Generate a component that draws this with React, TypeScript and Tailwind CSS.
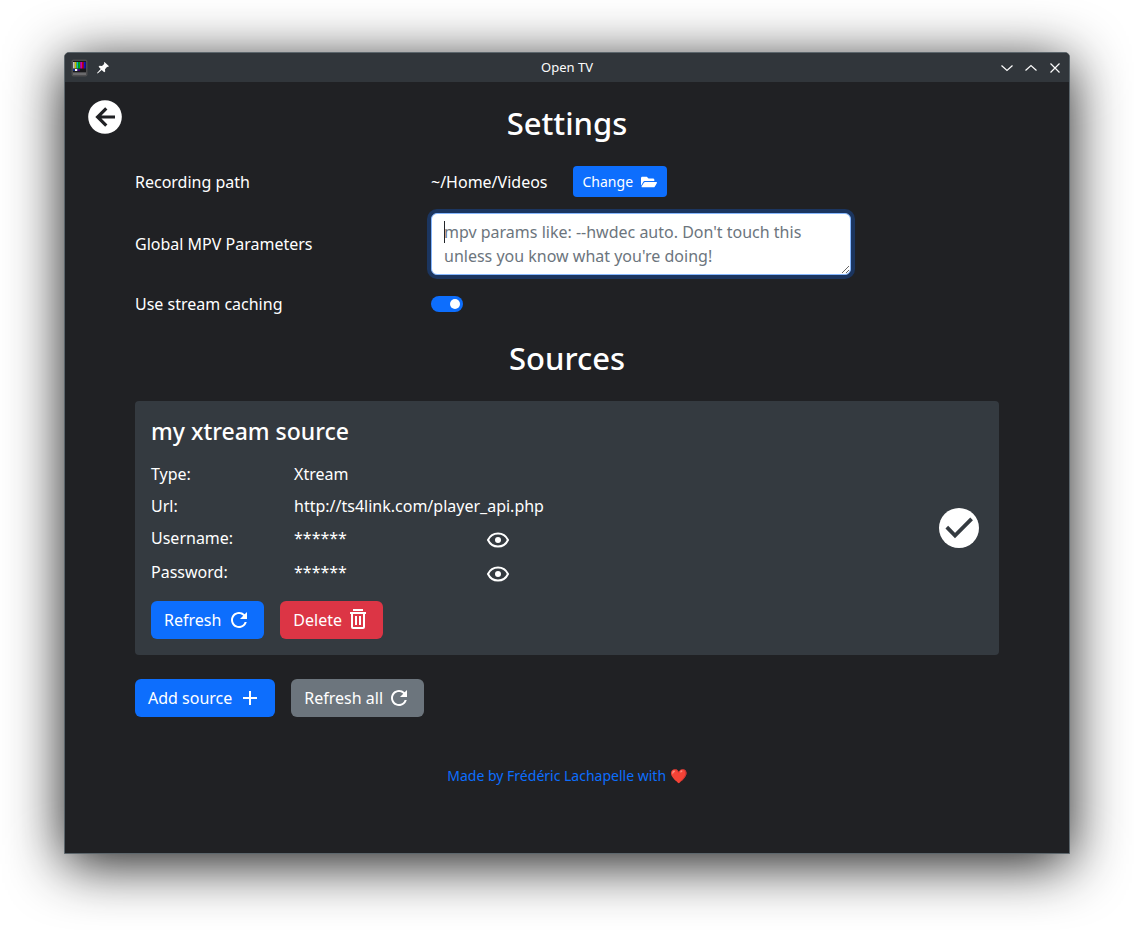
import React, { useState } from "react";
import { MdRefresh, MdAdd } from "react-icons/md";
import { FaFolderOpen } from "react-icons/fa";

const solid = "inline-flex h-[38px] items-center rounded-md px-[13px] text-base text-white";

function TvIcon() {
  return (
    <svg width="18" height="18" viewBox="0 0 18 18" aria-hidden="true">
      <rect x=".5" y=".5" width="16" height="17" rx="2" fill="#4c4c4e" />
      <rect x="2" y="2" width="13" height="11" fill="#19191b" />
      <rect x="2" y="3" width="1.8" height="6.5" fill="#c0c0c0" />
      <rect x="3.8" y="3" width="1.8" height="6.5" fill="#c9c400" />
      <rect x="5.6" y="3" width="1.8" height="6.5" fill="#00bdbd" />
      <rect x="7.4" y="3" width="1.8" height="6.5" fill="#00b800" />
      <rect x="9.2" y="3" width="1.8" height="6.5" fill="#c000b8" />
      <rect x="11" y="3" width="1.8" height="6.5" fill="#c40010" />
      <rect x="12.8" y="3" width="1.8" height="6.5" fill="#1010c8" />
      <rect x="2" y="10" width="2" height="2" fill="#14307c" />
      <rect x="4" y="10" width="2.5" height="2" fill="#fff" />
      <rect x="6.5" y="10" width="2.5" height="2" fill="#3c0878" />
      <rect x="2" y="14" width="13" height="2" fill="#6a6a6c" />
    </svg>
  );
}

function PinIcon() {
  return (
    <svg width="12" height="12" viewBox="0 0 12 12" fill="#fcfcfc" aria-hidden="true">
      <path d="M7.5 0 12 4.2 10.8 5.1 10.2 4.8 8 7.2 8.2 9.4 7.2 10.2 4.7 8 .7 11.6 0 11 3.7 7.1 1.6 4.7 2.5 3.8 5 4 7.4 1.8 6.8 1z" />
    </svg>
  );
}

function BackIcon() {
  return (
    <svg width="34" height="34" viewBox="0 0 34 34" aria-hidden="true">
      <circle cx="17" cy="17" r="16.8" fill="#fff" />
      <path d="M27 17H10M18.3 8.3 9.6 17l8.7 8.7" fill="none" stroke="#202124" strokeWidth="3.2" />
    </svg>
  );
}

function CheckIcon() {
  return (
    <svg width="40" height="40" viewBox="0 0 40 40" role="img" aria-label="Enabled">
      <circle cx="20" cy="20" r="20" fill="#fff" />
      <path d="m7.8 19.2 8.2 8.3 16.6-16.6" fill="none" stroke="#343a40" strokeWidth="3.8" />
    </svg>
  );
}

function TrashIcon() {
  return (
    <svg width="24" height="24" viewBox="0 0 24 24" fill="none" stroke="#fff" strokeWidth="2" aria-hidden="true">
      <path d="M7 2h10M4 5h16M6 5v14q0 1 1 1h10q1 0 1-1V5M10 8v9M14 8v9" />
    </svg>
  );
}

function EyeIcon() {
  return (
    <svg width="24" height="24" viewBox="0 0 24 24" aria-hidden="true">
      <path d="M2 12c2-4.2 5.8-6.5 10-6.5s8 2.3 10 6.5c-2 4.2-5.8 6.5-10 6.5S4 16.2 2 12z" fill="none" stroke="#fff" strokeWidth="2" />
      <circle cx="12" cy="12" r="3" fill="#fff" />
    </svg>
  );
}

function WindowButton({ label, d }: { label: string; d: string }) {
  return (
    <button aria-label={label} className="flex size-4 items-center justify-center">
      <svg width="12" height="12" viewBox="0 0 12 12" fill="none" stroke="#fcfcfc" strokeWidth="1.2">
        <path d={d} />
      </svg>
    </button>
  );
}

function Secret({ label, value }: { label: string; value: string }) {
  const [shown, setShown] = useState(false);
  return (
    <>
      <dt>{label}:</dt>
      <dd className="flex h-[26px] items-start">
        <span className="w-48">{shown ? value : "******"}</span>
        <button aria-label={`Show ${label.toLowerCase()}`} className="mt-0.5" onClick={() => setShown(!shown)}>
          <EyeIcon />
        </button>
      </dd>
    </>
  );
}

export default function App() {
  const [caching, setCaching] = useState(true);
  const [params, setParams] = useState("");
  return (
    <div className="min-h-screen bg-white px-16 pt-[52px] pb-[76px] font-['Noto_Sans',sans-serif] text-base text-white">
      <div className="overflow-hidden rounded-t-[5px] border border-[#5c666c] bg-[#202124] shadow-[0_10px_56px_rgba(0,0,0,0.9)]">
        <header className="grid h-[29px] grid-cols-[1fr_auto_1fr] items-center bg-[#31363b] px-1.5 text-[13px] text-[#fcfcfc]">
          <div className="flex items-center gap-2">
            <TvIcon />
            <PinIcon />
          </div>
          <span>Open TV</span>
          <div className="flex justify-end gap-2">
            <WindowButton label="Minimize" d="m.5 3.5 5.5 5 5.5-5" />
            <WindowButton label="Maximize" d="m.5 8.5 5.5-5 5.5 5" />
            <WindowButton label="Close" d="m1.5 1.5 9 9m0-9-9 9" />
          </div>
        </header>
        <main className="relative px-[70px] pt-[21px] pb-[66px]">
          <button aria-label="Back" className="absolute top-[18px] left-[23px]">
            <BackIcon />
          </button>
          <h2 className="text-center text-[31px] leading-10 font-medium">Settings</h2>
          <div className="mt-[23px] grid grid-cols-[1fr_2fr] items-center gap-x-3 gap-y-4">
            <span>Recording path</span>
            <div className="flex items-center gap-[25px]">
              <span>~/Home/Videos</span>
              <button className="flex h-[31px] items-center gap-2 rounded-[4px] bg-[#0d6efd] px-2.5 text-sm">
                Change
                <FaFolderOpen size={16} />
              </button>
            </div>
            <label htmlFor="mpv">Global MPV Parameters</label>
            <div className="relative">
              <textarea
                id="mpv"
                autoFocus
                rows={2}
                value={params}
                onChange={(e) => setParams(e.target.value)}
                placeholder="mpv params like: --hwdec auto. Don't touch this unless you know what you're doing!"
                className="peer block h-[62px] w-full max-w-[420px] rounded-md border border-[#86b7fe] bg-white px-3 py-1.5 leading-6 text-[#212529] shadow-[0_0_0_4px_#1b355f] outline-none placeholder:text-[#6c757d]"
              />
              <span className="pointer-events-none absolute top-2 left-[13px] hidden h-[22px] w-px bg-[#212529] peer-placeholder-shown:block" />
            </div>
            <label htmlFor="caching" className="leading-[26px]">Use stream caching</label>
            <input
              id="caching"
              type="checkbox"
              role="switch"
              checked={caching}
              onChange={(e) => setCaching(e.target.checked)}
              className="flex h-4 w-8 appearance-none items-center rounded-full bg-[#6c757d] px-[3px] before:size-2.5 before:rounded-full before:bg-white checked:justify-end checked:bg-[#0d6efd]"
            />
          </div>
          <h2 className="mt-[21px] text-center text-[31px] leading-10 font-medium">Sources</h2>
          <section className="mt-[23px] flex items-center justify-between rounded-[4px] bg-[#343a40] py-4 pr-5 pl-4">
            <div>
              <h3 className="text-[23px] leading-7 font-medium">my xtream source</h3>
              <dl className="mt-[17px] grid grid-cols-[143px_auto] gap-y-2 leading-6">
                <dt>Type:</dt>
                <dd>Xtream</dd>
                <dt>Url:</dt>
                <dd>http://ts4link.com/player_api.php</dd>
                <Secret label="Username" value="user01" />
                <Secret label="Password" value="pass01" />
              </dl>
              <div className="mt-[15px] flex gap-4">
                <button className={`${solid} gap-1.5 bg-[#0d6efd]`}>
                  Refresh
                  <MdRefresh size={24} />
                </button>
                <button className={`${solid} gap-1 bg-[#dc3545]`}>
                  Delete
                  <TrashIcon />
                </button>
              </div>
            </div>
            <CheckIcon />
          </section>
          <div className="mt-6 flex gap-4">
            <button className={`${solid} gap-1.5 bg-[#0d6efd]`}>
              Add source
              <MdAdd size={24} />
            </button>
            <button className={`${solid} gap-1 bg-[#6c757d]`}>
              Refresh all
              <MdRefresh size={24} />
            </button>
          </div>
          <p className="mt-12 text-center text-sm leading-[22px]">
            <a href="#author" className="text-[#0d6efd]">Made by Frédéric Lachapelle with ❤️</a>
          </p>
        </main>
      </div>
    </div>
  );
}
